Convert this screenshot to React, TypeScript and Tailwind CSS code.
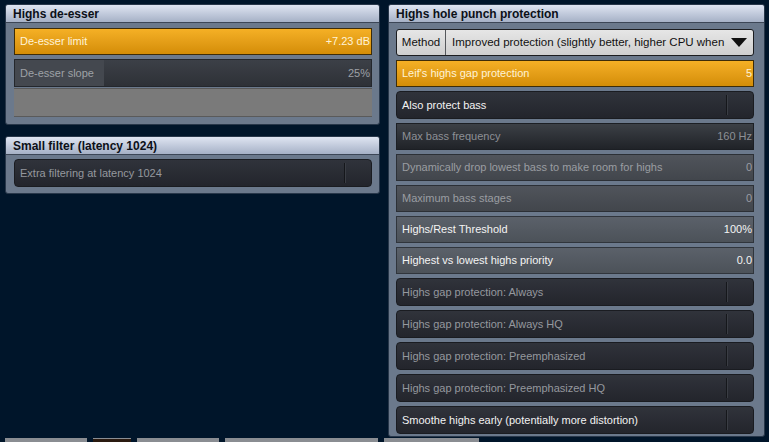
import React from 'react'

const font = { fontFamily: '"Liberation Sans", Arial, sans-serif' }

function Panel({ title, className, children }: { title: string; className?: string; children: React.ReactNode }) {
  return (
    <div className={`flex flex-col rounded-[3px] border border-[#28374a] bg-[#6b798c] ${className ?? ''}`}>
      <div className="h-[18px] shrink-0 rounded-t-[2px] border-b border-[#3c4656] bg-gradient-to-b from-[#dfe5f2] to-[#a6b1c6] pl-[7px] text-[12px] font-bold leading-[18px] text-[#0c1018]">
        {title}
      </div>
      {children}
    </div>
  )
}

function Slider({ label, value, tone }: { label: string; value: string; tone: 'orange' | 'dim' | 'mid' | 'light' }) {
  const styles = {
    orange: 'border-[#3d2c08] bg-gradient-to-b from-[#f5b025] to-[#d48d06] text-[#fff3d6]',
    dim: 'border-[#1c1f24] bg-gradient-to-b from-[#3c4046] to-[#202328] text-[#8d9096]',
    mid: 'border-[#2c3036] bg-gradient-to-b from-[#50545b] to-[#42464c] text-[#9a9da2]',
    light: 'border-[#30353c] bg-gradient-to-b from-[#5b616a] to-[#4c5259] text-[#f4f4f4]',
  }[tone]
  return (
    <div className={`flex h-[27px] items-center justify-between border pl-[5px] pr-[1px] text-[11px] ${styles}`}>
      <span>{label}</span>
      <span>{value}</span>
    </div>
  )
}

function Toggle({ label, bright }: { label: string; bright?: boolean }) {
  return (
    <div className="flex h-[28px] items-stretch rounded-[4px] border border-[#1a1c21] bg-gradient-to-b from-[#30333b] to-[#23252c] text-[11px]">
      <div className={`flex flex-1 items-center pl-[5px] ${bright ? 'text-[#f2f2f2]' : 'text-[#95989e]'}`}>{label}</div>
      <div className="my-[3px] w-[2px] bg-[#15171b] border-r border-[#3a3d44]" />
      <div className="w-[25px]" />
    </div>
  )
}

export default function App() {
  return (
    <div style={font} className="relative flex h-[442px] w-[769px] gap-[8px] overflow-hidden bg-[#00152a] pl-[5px] pt-[4px]">
      <div className="flex w-[375px] flex-col gap-[11px]">
        <Panel title="Highs de-esser" className="h-[121px]">
          <div className="flex flex-col gap-[4px] pl-[8px] pr-[7px] pt-[5px]">
            <Slider label="De-esser limit" value="+7.23 dB" tone="orange" />
            <div className="relative flex h-[28px] items-center justify-between border border-[#24272c] bg-gradient-to-b from-[#3c4047] to-[#2e3137] pl-[5px] pr-[1px] text-[11px] text-[#9ea1a6]">
              <div className="absolute inset-y-0 left-0 w-[89px] bg-[#44484f]" />
              <span className="relative">De-esser slope</span>
              <span className="relative">25%</span>
            </div>
            <div className="-mt-[3px] h-[29px] border-y border-[#5a5a5a] bg-[#7a7a7a]" />
          </div>
        </Panel>
        <Panel title="Small filter (latency 1024)" className="h-[58px]">
          <div className="pl-[8px] pr-[7px] pt-[4px]">
            <Toggle label="Extra filtering at latency 1024" />
          </div>
        </Panel>
      </div>
      <Panel title="Highs hole punch protection" className="h-[433px] w-[377px]">
        <div className="flex flex-col gap-[4px] pl-[7px] pr-[10px] pt-[6px]">
          <div className="flex h-[27px] items-stretch overflow-hidden whitespace-nowrap rounded-[3px] border border-[#1c1d20] bg-gradient-to-b from-[#e6e6e6] to-[#cfcfcf] text-[11.5px] text-[#111]">
            <div className="flex w-[49px] shrink-0 items-center justify-center border-r border-[#55585c]">Method</div>
            <div className="flex min-w-0 flex-1 items-center overflow-hidden pl-[6px]">Improved protection (slightly better, higher CPU when</div>
            <div className="flex w-[28px] shrink-0 items-center justify-center">
              <svg width="16" height="9" viewBox="0 0 16 9"><path d="M0 0h16L8 9z" fill="#111" /></svg>
            </div>
          </div>
          <Slider label="Leif's highs gap protection" value="5" tone="orange" />
          <Toggle label="Also protect bass" bright />
          <Slider label="Max bass frequency" value="160 Hz" tone="dim" />
          <Slider label="Dynamically drop lowest bass to make room for highs" value="0" tone="mid" />
          <Slider label="Maximum bass stages" value="0" tone="mid" />
          <Slider label="Highs/Rest Threshold" value="100%" tone="light" />
          <Slider label="Highest vs lowest highs priority" value="0.0" tone="light" />
          <Toggle label="Highs gap protection: Always" />
          <Toggle label="Highs gap protection: Always HQ" />
          <Toggle label="Highs gap protection: Preemphasized" />
          <Toggle label="Highs gap protection: Preemphasized HQ" />
          <Toggle label="Smoothe highs early (potentially more distortion)" bright />
        </div>
      </Panel>
      <div className="absolute bottom-0 left-[5px] flex h-[4px] gap-[6px]">
        <div className="w-[82px] bg-[#8a8d92]" />
        <div className="w-[38px] bg-[#2a1a10] border-t border-[#8a8d92]" />
        <div className="w-[82px] bg-[#8a8d92]" />
        <div className="w-[153px] bg-[#8a8d92]" />
        <div className="w-[95px] bg-[#8a8d92]" />
      </div>
    </div>
  )
}
